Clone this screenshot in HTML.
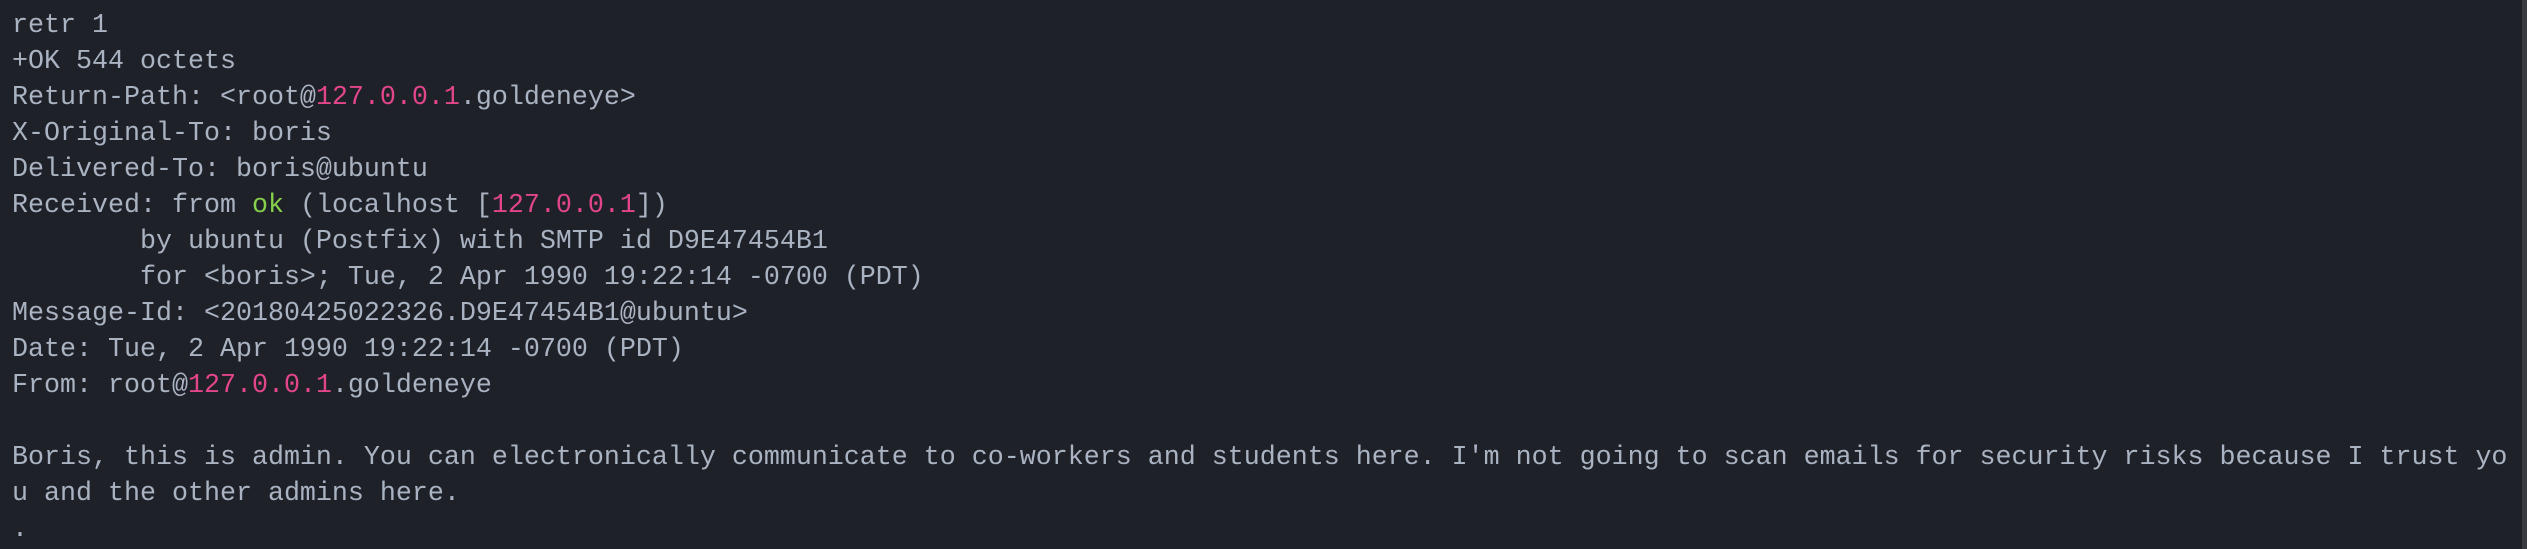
<!DOCTYPE html>
<html><head><meta charset="utf-8"><style>
html,body{margin:0;padding:0;background:#1f2129;width:2527px;height:549px;overflow:hidden}
pre{margin:0;padding:8px 0 0 12px;font-family:"Liberation Mono",monospace;font-size:26.67px;line-height:36px;color:#aab3c2;white-space:pre}
.p{color:#e2458a}.g{color:#86d04b}
.sb{position:absolute;right:0;top:0;width:5px;height:549px;background:#383a40}
</style></head><body>
<pre>retr 1
+OK 544 octets
Return-Path: &lt;root@<span class="p">127.0.0.1</span>.goldeneye&gt;
X-Original-To: boris
Delivered-To: boris@ubuntu
Received: from <span class="g">ok</span> (localhost [<span class="p">127.0.0.1</span>])
        by ubuntu (Postfix) with SMTP id D9E47454B1
        for &lt;boris&gt;; Tue, 2 Apr 1990 19:22:14 -0700 (PDT)
Message-Id: &lt;20180425022326.D9E47454B1@ubuntu&gt;
Date: Tue, 2 Apr 1990 19:22:14 -0700 (PDT)
From: root@<span class="p">127.0.0.1</span>.goldeneye

Boris, this is admin. You can electronically communicate to co-workers and students here. I'm not going to scan emails for security risks because I trust yo
u and the other admins here.
.</pre>
<div class="sb"></div>
</body></html>
